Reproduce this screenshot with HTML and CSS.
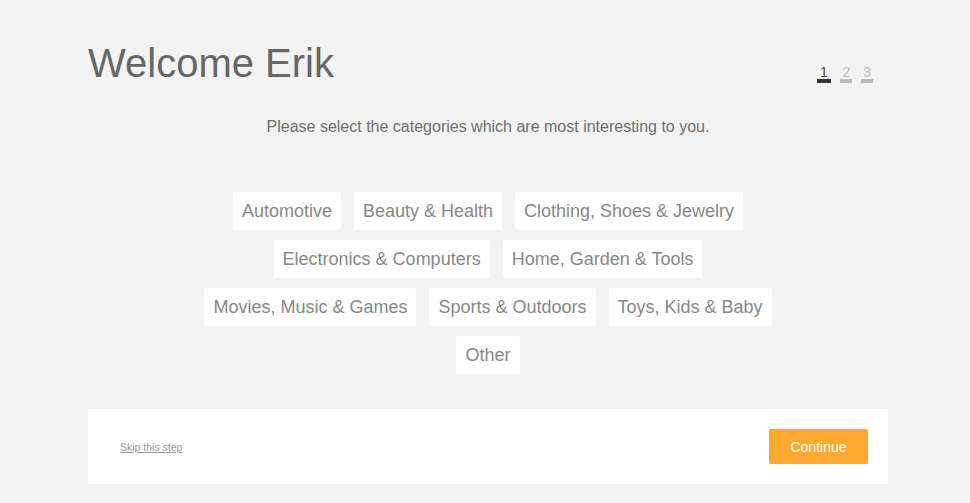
FILE: index.html
```html
<html>
    <head>
        <title>Welcome</title>
        <meta name="viewport" content="width=device-width, initial-scale=1.0">
        <link rel="stylesheet" href="styles.css">
    </head>
    <body>
        <section id="page">
            <div id="intro">
                <h1>Welcome Erik</h1>
                <nav id="steps">
                    <a class="step active">1</a>
                    <a class="step">2</a>
                    <a class="step">3</a>
                </nav>
            </div>
            <p id="lead">Please select the categories which are most interesting to you.</p>
            <ul id="categories">
                <li>Automotive</li>
                <li>Beauty &amp; Health</li>
                <li>Clothing, Shoes &amp; Jewelry</li>
                <li>Electronics &amp; Computers</li>
                <li>Home, Garden &amp; Tools</li>
                <li>Movies, Music &amp; Games</li>
                <li>Sports &amp; Outdoors</li>
                <li>Toys, Kids &amp; Baby</li>
                <li>Other</li>
            </ul>
            <div id="actions">
                <a id="skipLink" href="#">Skip this step</a>
                <button id="continueButton">Continue</button>
            </div>
        </section>
    </body>
</html>
```

FILE: styles.css
```css
body {
    margin: 0;
    background-color: #f3f3f3;
    font-family: "Liberation Sans", Arial, sans-serif;
}

#page {
    width: 800px;
    margin: 0 0 0 88px;
    padding-top: 40px;
}

#intro {
    display: flex;
    justify-content: space-between;
    align-items: baseline;
    padding-right: 15px;
}

#intro > h1 {
    margin: 0;
    font-size: 40px;
    font-weight: normal;
    line-height: 46px;
    color: #666666;
}

#steps {
    display: flex;
    align-items: baseline;
}

.step {
    font-size: 14px;
    line-height: 14px;
    padding: 0 2px;
    margin-left: 9px;
    color: #bbbbbb;
    border-bottom: 4px solid #bbbbbb;
    text-align: center;
}

.step.active {
    padding: 0 3.5px;
    margin-left: 0;
    color: #444444;
    border-bottom-color: #333333;
}

#lead {
    margin: 32px 0 0 0;
    font-size: 16px;
    line-height: 18px;
    color: #6e6e6e;
    text-align: center;
}

#categories {
    list-style: none;
    width: 600px;
    margin: 56px auto 0 auto;
    padding: 0;
    display: flex;
    flex-wrap: wrap;
    justify-content: center;
    gap: 10px 13px;
}

#categories > li {
    height: 38px;
    line-height: 38px;
    padding: 0 9px;
    background-color: white;
    border-radius: 2px;
    font-size: 18px;
    color: #878787;
}

#actions {
    margin-top: 35px;
    padding: 20px 20px 20px 32px;
    background-color: white;
    display: flex;
    justify-content: space-between;
    align-items: center;
}

#skipLink {
    font-size: 10.5px;
    color: #999999;
}

#continueButton {
    height: 35px;
    width: 99px;
    padding: 0;
    border: none;
    border-radius: 2px;
    background-color: #ffaa2e;
    color: white;
    font-family: "Liberation Sans", Arial, sans-serif;
    font-size: 14px;
    outline: none;
    cursor: pointer;
}
```
